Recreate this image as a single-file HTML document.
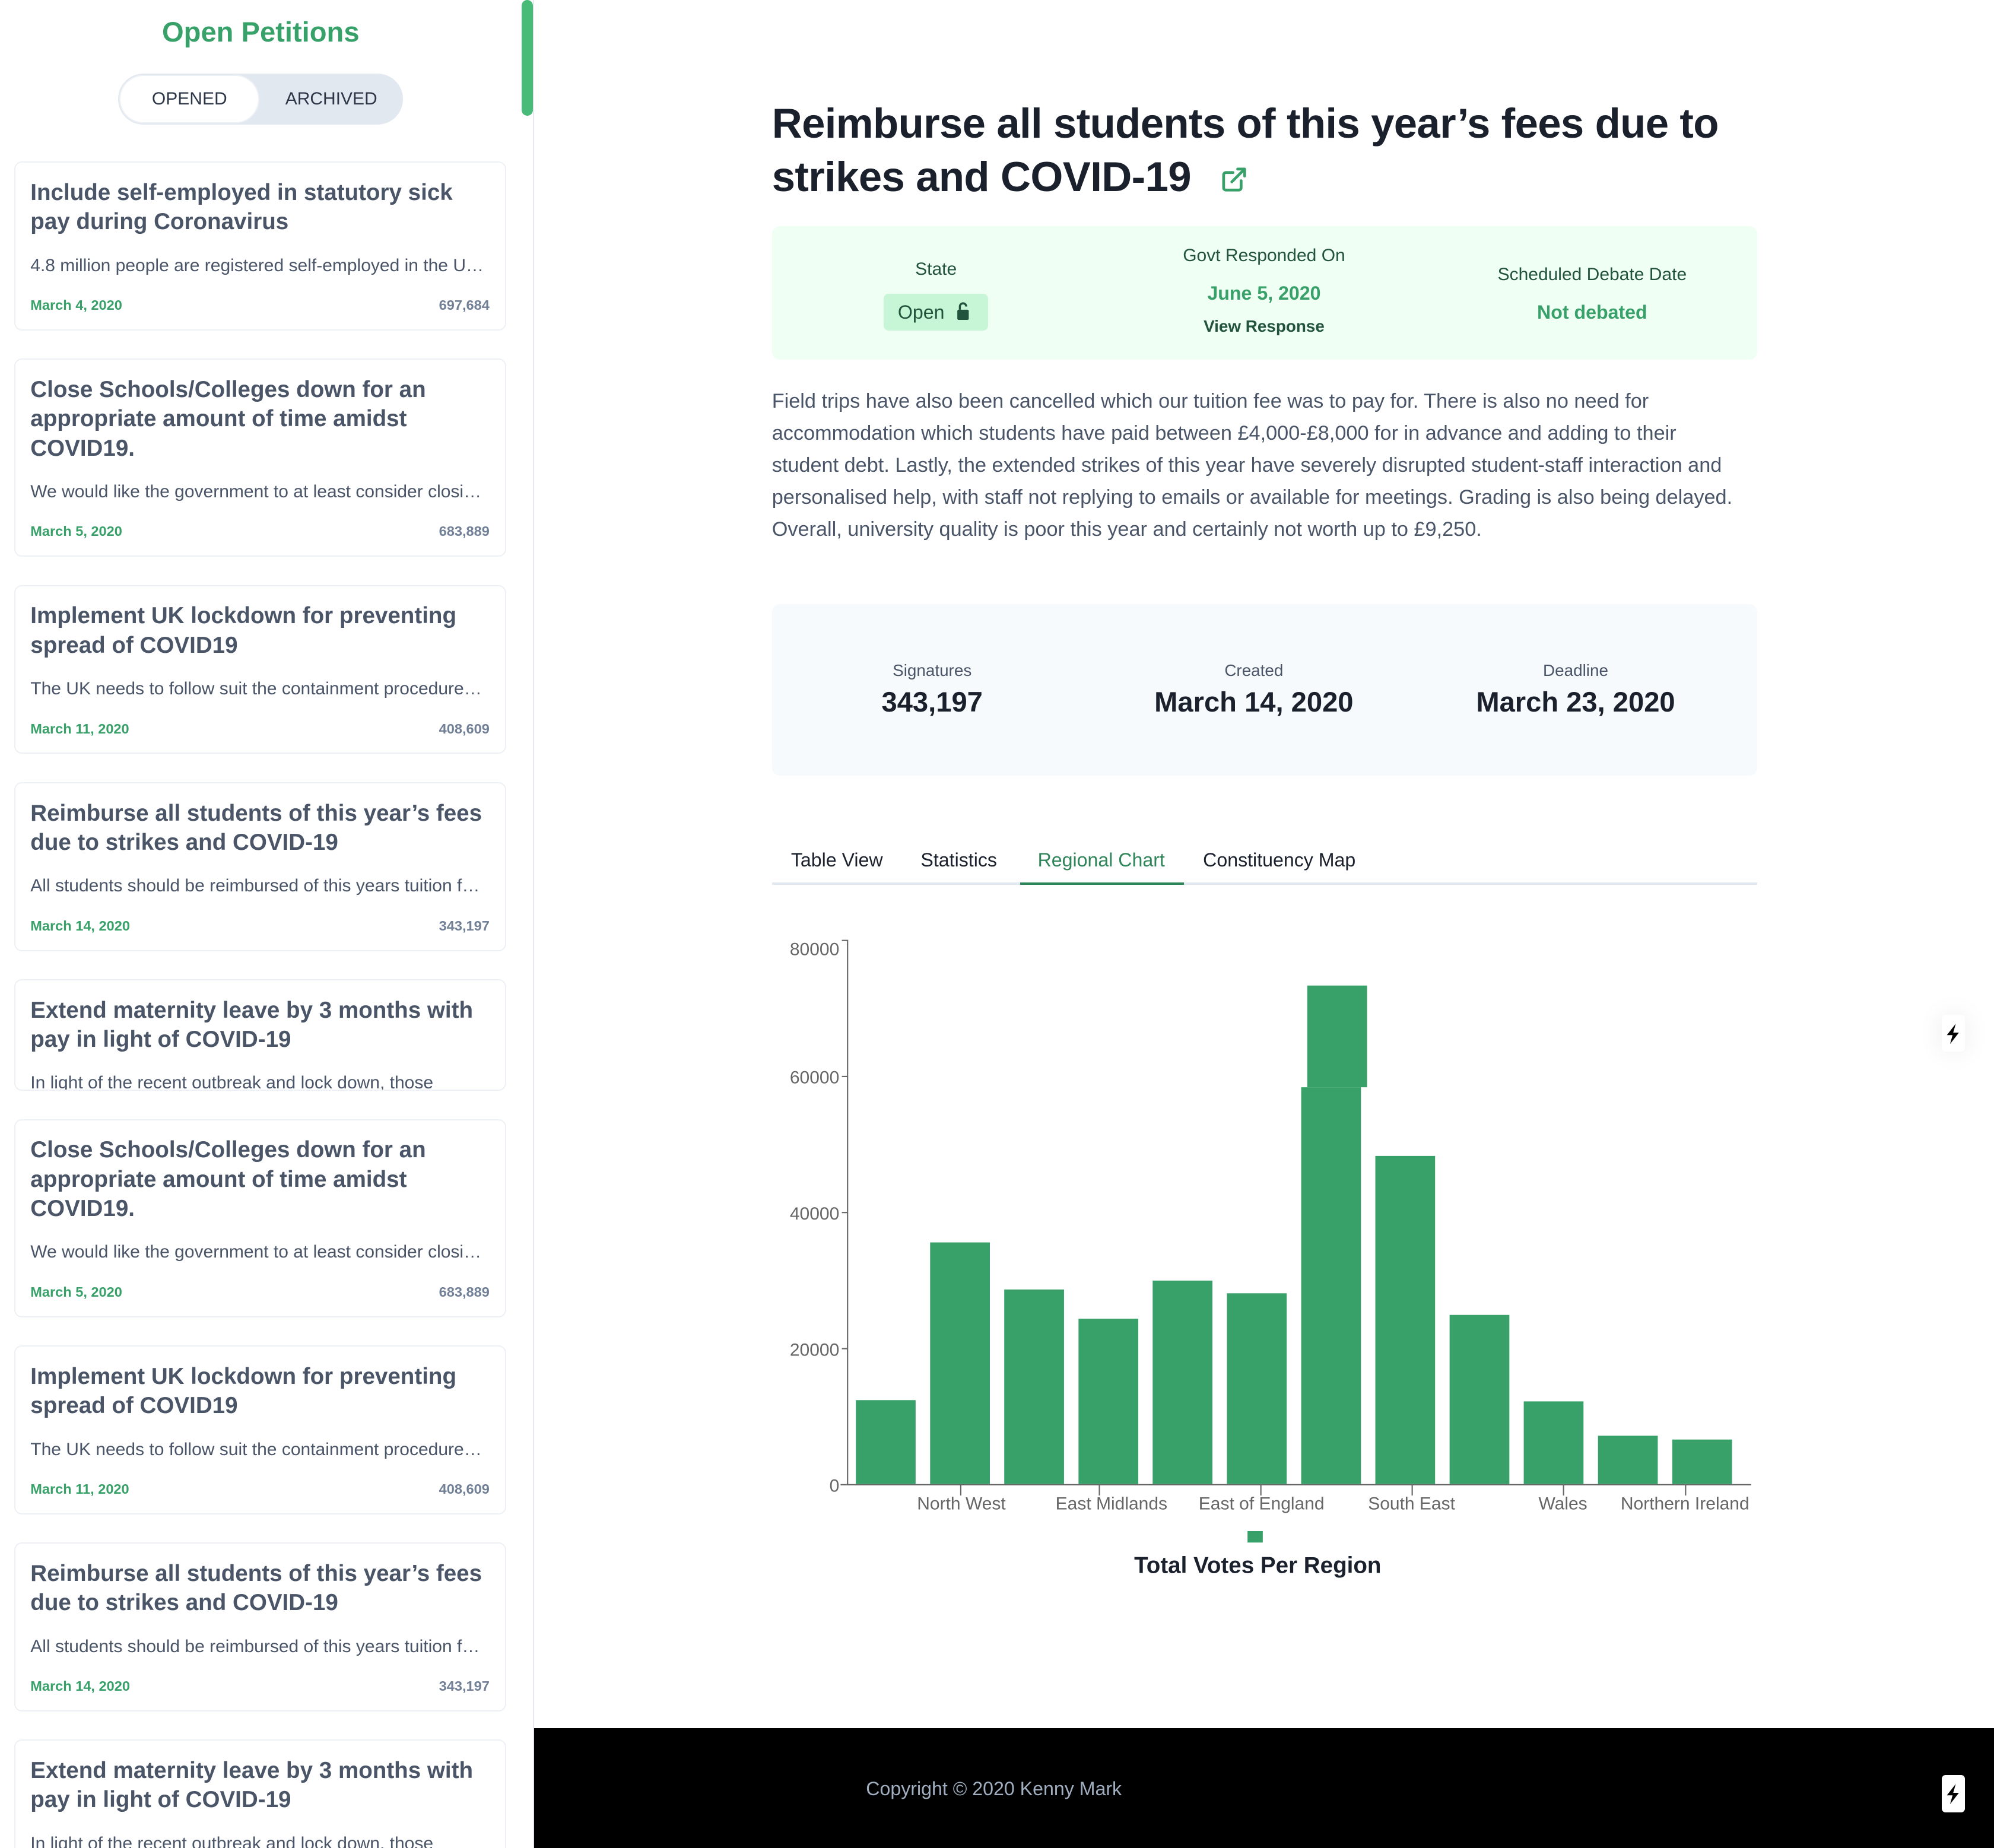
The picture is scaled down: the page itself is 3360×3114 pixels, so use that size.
<!DOCTYPE html>
<html><head><meta charset="utf-8"><style>
html{zoom:2.142857}
body{margin:0;width:1568px;height:1453px;position:relative;overflow:hidden;background:#fff;font-family:"Liberation Sans",sans-serif;color:#1a202c}
.a{position:absolute}
.side{left:0;top:0;width:419px;height:1453px;border-right:1px solid #e5e9ef;overflow:hidden}
.card{position:absolute;left:11px;width:385px;border:1px solid #edf0f4;border-radius:6px;overflow:hidden;background:#fff}
.card h3{margin:12px 12px 0;font-size:18px;line-height:23px;color:#4a5568;font-weight:bold;letter-spacing:0px}
.card p{margin:15px 12px 0;font-size:14px;color:#4a5568;white-space:nowrap;overflow:hidden;text-overflow:ellipsis}
.card .m{display:flex;justify-content:space-between;margin:17px 12px 0;font-size:11px;font-weight:bold}
.card .m span:first-child{color:#38a169}.card .m span:last-child{color:#718096}
.lbl{font-size:14px;color:#22543d;text-align:center}
.tab{font-size:15px;top:668px}
.st{text-align:center;width:250px}
.st div:first-child{font-size:13px;color:#4a5568}
.st div:last-child{font-size:22px;font-weight:bold;margin-top:4px}
</style></head><body>
<div class="a side">
 <div class="a" style="left:0;width:410px;top:12px;text-align:center;font-size:22px;font-weight:bold;color:#38a169">Open Petitions</div>
 <div class="a" style="left:93px;top:58px;width:224px;height:40px;border-radius:20px;background:#e2e8f0"></div>
 <div class="a" style="left:94px;top:59px;width:110px;height:38px;border-radius:19px;background:#fff;border:1px solid #edf0f4;box-sizing:border-box"></div>
 <div class="a" style="left:94px;top:70px;width:110px;text-align:center;font-size:14px;color:#2d3748">OPENED</div>
 <div class="a" style="left:204px;top:70px;width:113px;text-align:center;font-size:14px;color:#2d3748">ARCHIVED</div>
 <div class="a" style="left:410px;top:0;width:9px;height:91px;border-radius:5px;background:#48bb78"></div>

 <div class="card" style="top:127px;height:131px"><h3>Include self-employed in statutory sick pay during Coronavirus</h3><p>4.8 million people are registered self-employed in the UK and many will be affected</p><div class="m"><span>March 4, 2020</span><span>697,684</span></div></div>
 <div class="card" style="top:282px;height:154px"><h3>Close Schools/Colleges down for an appropriate amount of time amidst COVID19.</h3><p>We would like the government to at least consider closing schools</p><div class="m"><span>March 5, 2020</span><span>683,889</span></div></div>
 <div class="card" style="top:460px;height:131px"><h3>Implement UK lockdown for preventing spread of COVID19</h3><p>The UK needs to follow suit the containment procedures of other countries</p><div class="m"><span>March 11, 2020</span><span>408,609</span></div></div>
 <div class="card" style="top:615px;height:131px"><h3>Reimburse all students of this year’s fees due to strikes and COVID-19</h3><p>All students should be reimbursed of this years tuition fees</p><div class="m"><span>March 14, 2020</span><span>343,197</span></div></div>
 <div class="card" style="top:770px;height:86px"><h3>Extend maternity leave by 3 months with pay in light of COVID-19</h3><p>In light of the recent outbreak and lock down, those</p></div>
 <div class="card" style="top:880px;height:154px"><h3>Close Schools/Colleges down for an appropriate amount of time amidst COVID19.</h3><p>We would like the government to at least consider closing schools</p><div class="m"><span>March 5, 2020</span><span>683,889</span></div></div>
 <div class="card" style="top:1058px;height:131px"><h3>Implement UK lockdown for preventing spread of COVID19</h3><p>The UK needs to follow suit the containment procedures of other countries</p><div class="m"><span>March 11, 2020</span><span>408,609</span></div></div>
 <div class="card" style="top:1213px;height:131px"><h3>Reimburse all students of this year’s fees due to strikes and COVID-19</h3><p>All students should be reimbursed of this years tuition fees</p><div class="m"><span>March 14, 2020</span><span>343,197</span></div></div>
 <div class="card" style="top:1368px;height:120px"><h3>Extend maternity leave by 3 months with pay in light of COVID-19</h3><p>In light of the recent outbreak and lock down, those</p></div>
</div>

<div class="a" style="left:607px;top:76px;width:780px;font-size:33px;line-height:42px;font-weight:bold;color:#1a202c;letter-spacing:-0.3px">Reimburse all students of this year’s fees due to strikes and COVID-19 <svg width="22" height="22" viewBox="0 0 24 24" fill="none" stroke="#38a169" stroke-width="2.4" stroke-linecap="round" stroke-linejoin="round" style="vertical-align:-2px;margin-left:14px"><path d="M18 13v6a2 2 0 0 1-2 2H5a2 2 0 0 1-2-2V8a2 2 0 0 1 2-2h6M15 3h6v6M10 14L21 3"/></svg></div>

<div class="a" style="left:607px;top:178px;width:775px;height:105px;background:#f0fff4;border-radius:6px"></div>
<div class="a lbl" style="left:686px;width:100px;top:204px">State</div>
<div class="a" style="left:695px;top:231px;width:82px;height:29px;background:#c6f6d5;border-radius:4px;font-size:15px;color:#22543d;line-height:29px;padding-left:11px;box-sizing:border-box">Open <svg width="11" height="14" viewBox="0 0 11 14" style="vertical-align:-1px;margin-left:5px"><path d="M3 6V3.5a2.5 2.5 0 0 1 5 0" fill="none" stroke="#22543d" stroke-width="1.6"/><rect x="1" y="6" width="9" height="8" rx="1" fill="#22543d"/></svg></div>
<div class="a lbl" style="left:894px;width:200px;top:193px">Govt Responded On</div>
<div class="a" style="left:894px;width:200px;top:222px;text-align:center;font-size:15px;font-weight:bold;color:#38a169">June 5, 2020</div>
<div class="a" style="left:894px;width:200px;top:249px;text-align:center;font-size:13px;font-weight:bold;color:#22543d">View Response</div>
<div class="a lbl" style="left:1152px;width:200px;top:208px">Scheduled Debate Date</div>
<div class="a" style="left:1152px;width:200px;top:237px;text-align:center;font-size:15px;font-weight:bold;color:#38a169">Not debated</div>

<div class="a" style="left:607px;top:303px;width:768px;font-size:16px;line-height:25.2px;color:#4a5568">Field trips have also been cancelled which our tuition fee was to pay for. There is also no need for accommodation which students have paid between £4,000-£8,000 for in advance and adding to their student debt. Lastly, the extended strikes of this year have severely disrupted student-staff interaction and personalised help, with staff not replying to emails or available for meetings. Grading is also being delayed. Overall, university quality is poor this year and certainly not worth up to £9,250.</div>

<div class="a" style="left:607px;top:475px;width:775px;height:135px;background:#f7fafc;border-radius:6px"></div>
<div class="a st" style="left:608px;top:520px"><div>Signatures</div><div>343,197</div></div>
<div class="a st" style="left:861px;top:520px"><div>Created</div><div>March 14, 2020</div></div>
<div class="a st" style="left:1114px;top:520px"><div>Deadline</div><div>March 23, 2020</div></div>

<div class="a tab" style="left:622px">Table View</div>
<div class="a tab" style="left:724px">Statistics</div>
<div class="a tab" style="left:816px;color:#2f855a">Regional Chart</div>
<div class="a tab" style="left:946px">Constituency Map</div>
<div class="a" style="left:607px;top:694px;width:775px;height:2px;background:#e2e8f0"></div>
<div class="a" style="left:802px;top:694px;width:129px;height:2px;background:#2f855a"></div>

<svg class="a" style="left:0;top:0" width="1568" height="1360">
<g fill="#38a169">
<rect x="673" y="1101" width="47" height="66"/>
<rect x="731.4" y="977" width="47" height="190"/>
<rect x="789.7" y="1014" width="47" height="153"/>
<rect x="848.1" y="1037" width="47" height="130"/>
<rect x="906.4" y="1007" width="47" height="160"/>
<rect x="964.8" y="1017" width="47" height="150"/>
<rect x="1023.2" y="855" width="47" height="312"/>
<rect x="1028" y="775" width="47" height="80"/>
<rect x="1081.5" y="909" width="47" height="258"/>
<rect x="1139.9" y="1034" width="47" height="133"/>
<rect x="1198.2" y="1102" width="47" height="65"/>
<rect x="1256.6" y="1129" width="47" height="38"/>
<rect x="1315" y="1132" width="47" height="35"/>
<rect x="981" y="1204" width="12" height="9"/>
</g>
<g stroke="#666" stroke-width="1" fill="none">
<path d="M666.5 739v429M661 1167.5h716M662 739.5h4M662 846.5h4M662 953.5h4M662 1060.5h4M755.5 1168v8M864.5 1168v8M991.5 1168v8M1110.5 1168v8M1229.5 1168v8M1325.5 1168v8"/>
</g>
<g font-family="Liberation Sans" font-size="14" fill="#666">
<text x="660" y="751" text-anchor="end">80000</text>
<text x="660" y="852" text-anchor="end">60000</text>
<text x="660" y="959" text-anchor="end">40000</text>
<text x="660" y="1066" text-anchor="end">20000</text>
<text x="660" y="1173" text-anchor="end">0</text>
<g text-anchor="middle">
<text x="756" y="1187">North West</text>
<text x="874" y="1187">East Midlands</text>
<text x="992" y="1187">East of England</text>
<text x="1110" y="1187">South East</text>
<text x="1229" y="1187">Wales</text>
<text x="1325" y="1187">Northern Ireland</text>
</g></g>
<text x="989" y="1237" text-anchor="middle" font-family="Liberation Sans" font-size="18" font-weight="bold" fill="#1a202c">Total Votes Per Region</text>
</svg>

<div class="a" style="left:1527px;top:798px;width:18px;height:29px;background:#fff;border-radius:3px;box-shadow:0 0 20px rgba(0,0,0,.08)"><svg width="18" height="29" viewBox="0 0 18 29"><path d="M11 7L4 16h4.5l-2 7 7-9H9z" fill="#000"/></svg></div>

<div class="a" style="left:420px;top:1359px;width:1148px;height:94px;background:#000"></div>
<div class="a" style="left:681px;top:1398px;font-size:15px;color:#a0aec0">Copyright © 2020 Kenny Mark</div>
<div class="a" style="left:1527px;top:1396px;width:18px;height:29px;background:#fff;border-radius:3px"><svg width="18" height="29" viewBox="0 0 18 29"><path d="M11 7L4 16h4.5l-2 7 7-9H9z" fill="#000"/></svg></div>
</body></html>
